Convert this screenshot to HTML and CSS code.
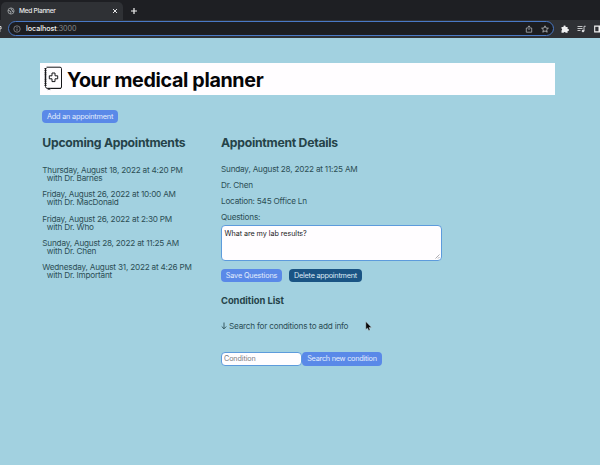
FILE: index.html
```
<!DOCTYPE html>
<html lang="en">
<head>
<meta charset="utf-8">
<title>Med Planner</title>
<link rel="stylesheet" href="styles.css">
</head>
<body>
<div class="browser">
  <div class="tabs">
    <div class="tab">
      <svg class="globe" viewBox="0 0 8 8"><circle cx="4" cy="4" r="3.1" fill="#34373b" stroke="#a5a8ab" stroke-width=".8"/><path d="M1 3.5l2 .4 1 1.2-.6 1.7M4 1v1.2l1.4.8L5 4.2l1.9.6" fill="none" stroke="#a5a8ab" stroke-width=".9"/></svg>
      <span class="tab-title">Med Planner</span>
      <svg class="close" viewBox="0 0 6 6"><path d="M1 1l4 4M5 1l-4 4" stroke="#e4e5e7" stroke-width="1"/></svg>
    </div>
    <svg class="plus" viewBox="0 0 8 8"><path d="M4 1v6M1 4h6" stroke="#f0f0f0" stroke-width="1.2"/></svg>
  </div>
  <div class="toolbar">
    <svg class="reload" viewBox="0 0 2 8"><path d="M0 1.5h1V4H0M0 6h.7" stroke="#ddd" fill="none"/></svg>
    <div class="address">
      <svg class="info" viewBox="0 0 8 8"><circle cx="4" cy="4" r="3.2" fill="none" stroke="#9b9ea2" stroke-width=".7"/><path d="M4 3.6v2.2M4 2.1v.8" stroke="#9b9ea2" stroke-width=".8"/></svg>
      <span class="url">localhost<span class="port">:3000</span></span>
      <svg class="share" viewBox="0 0 8 8"><path d="M2.8 3H1.3v4.2h5.4V3H5.2M4 5V.9M2.6 2.2L4 .9l1.4 1.3" fill="none" stroke="#b7b9bc" stroke-width=".75"/></svg>
      <svg class="star" viewBox="0 0 8 8"><path d="M4 .8l1 2.2 2.4.2-1.8 1.6.6 2.4L4 5.9 1.8 7.2l.6-2.4L.6 3.2 3 3z" fill="none" stroke="#c7c9cb" stroke-width=".75"/></svg>
    </div>
    <svg class="puzzle" viewBox="0 0 8 8"><path d="M.5 2h2a1.1 1.1 0 1 1 2.1 0h2v2a1.05 1.05 0 1 1 0 2v1.7H4.7a1.1 1.1 0 0 0-2.1 0H.5V5.6a1.1 1.1 0 0 0 0-2z" fill="#f0f1f2"/></svg>
    <svg class="queue" viewBox="0 0 9 8"><path d="M.5 1.5h5M.5 3.5h5M.5 5.5h3M7 6V1.3h1.7" fill="none" stroke="#d5d6d8" stroke-width=".9"/><circle cx="6" cy="6" r="1.3" fill="#d5d6d8"/></svg>
    <svg class="panel" viewBox="0 0 6 8"><path d="M6 1.1H.7v5.8H6" fill="none" stroke="#f2f2f2" stroke-width="1.1"/><path d="M4.5 1H6v6H4.5z" fill="#f2f2f2"/></svg>
  </div>
</div>
<main class="page">
  <header class="banner">
    <svg class="book" viewBox="0 0 20 25"><path d="M3.5 1.2H17q1.5 0 1.5 1.5v18.4q0 1.4-1.5 1.4H7.5M2.5 3v17.5q0 1.6 1.6 1.8M4 22.3h14" fill="none" stroke="#17171a" stroke-width="1"/><path d="M2.5 2v19" stroke="#17171a" stroke-width="2" stroke-dasharray="1.2 .9"/><path d="M4.8 22v2.2l1.2-.9 1.2.9V22z" fill="#17171a"/><path d="M9 7h3v2.8h2.7v3H12v2.8H9v-2.8H6.3v-3H9z" fill="none" stroke="#17171a" stroke-width="1"/></svg>
    <h1 class="title">Your medical planner</h1>
  </header>
  <button class="btn add">Add an appointment</button>
  <div class="columns">
    <section class="upcoming">
      <h2>Upcoming Appointments</h2>
      <ul class="list">
        <li>Thursday, August 18, 2022 at 4:20 PM<span class="doctor">with Dr. Barnes</span></li>
        <li>Friday, August 26, 2022 at 10:00 AM<span class="doctor">with Dr. MacDonald</span></li>
        <li>Friday, August 26, 2022 at 2:30 PM<span class="doctor">with Dr. Who</span></li>
        <li>Sunday, August 28, 2022 at 11:25 AM<span class="doctor">with Dr. Chen</span></li>
        <li>Wednesday, August 31, 2022 at 4:26 PM<span class="doctor">with Dr. Important</span></li>
      </ul>
    </section>
    <section class="details">
      <h2>Appointment Details</h2>
      <div class="facts">
        <p>Sunday, August 28, 2022 at 11:25 AM</p>
        <p>Dr. Chen</p>
        <p>Location: 545 Office Ln</p>
        <p>Questions:</p>
      </div>
      <div class="question-box">
        <textarea class="questions">What are my lab results?</textarea>
        <svg class="grip" viewBox="0 0 5 5"><path d="M.5 4.5l4-4M3 4.5L4.5 3" stroke="#77777c" stroke-width=".6"/></svg>
      </div>
      <div class="actions">
        <button class="btn save">Save Questions</button>
        <button class="btn delete">Delete appointment</button>
      </div>
      <h3 class="conditions">Condition List</h3>
      <p class="hint"><svg class="down" viewBox="0 0 6 8"><path d="M3 .5v6.3M.7 4.5L3 6.8l2.3-2.3" fill="none" stroke="#2c4e55" stroke-width=".9"/></svg>Search for conditions to add info</p>
      <div class="search">
        <input class="condition" placeholder="Condition">
        <button class="btn find">Search new condition</button>
      </div>
    </section>
  </div>
</main>
<svg class="pointer" viewBox="0 0 7 10"><path d="M.8.5v8l1.7-1.5 1.2 2.5 1.4-.6L4 6.5h2.6z" fill="#080808" stroke="#d9e4e8" stroke-width=".4"/></svg>
</body>
</html>
```
FILE: styles.css
```
* { box-sizing: border-box; }
body {
  margin: 0;
  width: 600px;
  height: 465px;
  overflow: hidden;
  background: #a2d1e0;
  color: #2c4e55;
  font-family: Inter, "Liberation Sans", sans-serif;
  font-size: 8.2px;
  letter-spacing: -.21px;
}
svg { display: block; flex: none; }
h1, h2, h3, p, ul { margin: 0; padding: 0; }

.browser { height: 38px; background: #1e1f23; letter-spacing: 0; }
.tabs { display: flex; height: 20px; padding-top: 2px; }
.tab {
  display: flex;
  align-items: center;
  width: 122px;
  margin-left: 1px;
  padding: 0 5px 0 6px;
  border-radius: 5px 5px 0 0;
  background: #2f3135;
}
.globe { width: 8px; height: 8px; }
.tab-title { margin-left: 4px; color: #e6e7e9; font-size: 6.6px; font-weight: 500; letter-spacing: -.28px; }
.close { width: 6px; height: 6px; margin-left: auto; }
.plus { width: 8px; height: 8px; margin: 5px 0 0 7px; }
.toolbar { display: flex; align-items: center; height: 18px; padding-bottom: 1px; background: #2f3135; }
.reload { width: 2px; height: 8px; }
.address {
  display: flex;
  align-items: center;
  width: 546px;
  height: 15px;
  margin-left: 6px;
  padding: 0 4px 0 4px;
  border: 1.3px solid #4978c4;
  border-radius: 8px;
  background: #1c1d20;
}
.info { width: 8px; height: 8px; }
.url { margin-left: 5px; color: #f0f1f2; font-size: 7.2px; font-weight: 500; letter-spacing: -.06px; }
.port { color: #85888c; font-weight: 400; }
.share { width: 8px; height: 8px; margin-left: auto; }
.star { width: 8px; height: 8px; margin-left: 8px; }
.puzzle { width: 8px; height: 8px; margin-left: 7px; }
.queue { width: 9px; height: 8px; margin-left: 8px; }
.panel { width: 6px; height: 8px; margin-left: 8px; }

.page { padding: 25.4px 45px 0 40px; }
.banner { display: flex; align-items: center; height: 31.6px; padding-left: 3px; background: #fffdff; }
.book { width: 20px; height: 25px; margin-bottom: 1px; }
.title { margin: 2px 0 0 4px; color: #050507; font-size: 19.7px; font-weight: 700; line-height: 24px; letter-spacing: -.35px; white-space: nowrap; }

.btn {
  display: block;
  flex: none;
  height: 13px;
  padding: 0;
  border: 0;
  border-radius: 4px;
  background: #5a89e8;
  color: #e3edfc;
  font: 400 7.3px/13px Inter, sans-serif;
  letter-spacing: -.25px;
  text-align: center;
  white-space: nowrap;
}
.add { width: 75.5px; margin: 15px 0 0 2.3px; letter-spacing: -.2px; }
.columns { display: grid; grid-template-columns: 178.7px 222px; margin: 12px 0 0 2.3px; }
h2 { color: #254349; font-size: 12.2px; font-weight: 650; line-height: 16px; white-space: nowrap; letter-spacing: -.25px; }
.list { margin-top: 15px; list-style: none; line-height: 8.1px; white-space: nowrap; }
.list li { margin-bottom: 8.1px; }
.doctor { display: block; padding-left: 4.5px; }
.facts { margin-top: 9.7px; line-height: 16.1px; }
.question-box { position: relative; width: 221px; margin-top: -.2px; }
.questions {
  display: block;
  width: 221px;
  height: 36px;
  padding: 3px 2.5px;
  border: 1.3px solid #5d9bdc;
  border-radius: 4px;
  background: #fffdff;
  color: #1b1b1e;
  font: 400 7.2px/9px Inter, sans-serif;
  letter-spacing: -.05px;
  resize: none;
}
.grip { position: absolute; right: 2px; bottom: 2px; width: 5px; height: 5px; }
.actions { display: flex; gap: 7px; margin-top: 7.8px; }
.save { width: 61px; letter-spacing: -.15px; }
.delete { width: 73px; background: #1a5484; color: #dce9f4; }
.conditions { margin-top: 13px; color: #254349; font-size: 9.4px; font-weight: 650; line-height: 12px; letter-spacing: -.03px; }
.hint { display: flex; align-items: center; margin-top: 13.6px; line-height: 12px; }
.down { width: 6px; height: 8px; margin-right: 2px; }
.search { display: flex; margin-top: 19.7px; }
.condition {
  width: 81px;
  height: 14px;
  padding: 0 2px;
  border: 1.3px solid #5d9bdc;
  border-radius: 4px;
  background: #fffdff;
  font: 400 7.2px/11px Inter, sans-serif;
  letter-spacing: -.1px;
}
.condition::placeholder { color: #7c7c80; }
.find { width: 80px; height: 14px; line-height: 14px; }
.pointer { position: absolute; left: 365px; top: 321px; width: 7px; height: 10px; }
```
